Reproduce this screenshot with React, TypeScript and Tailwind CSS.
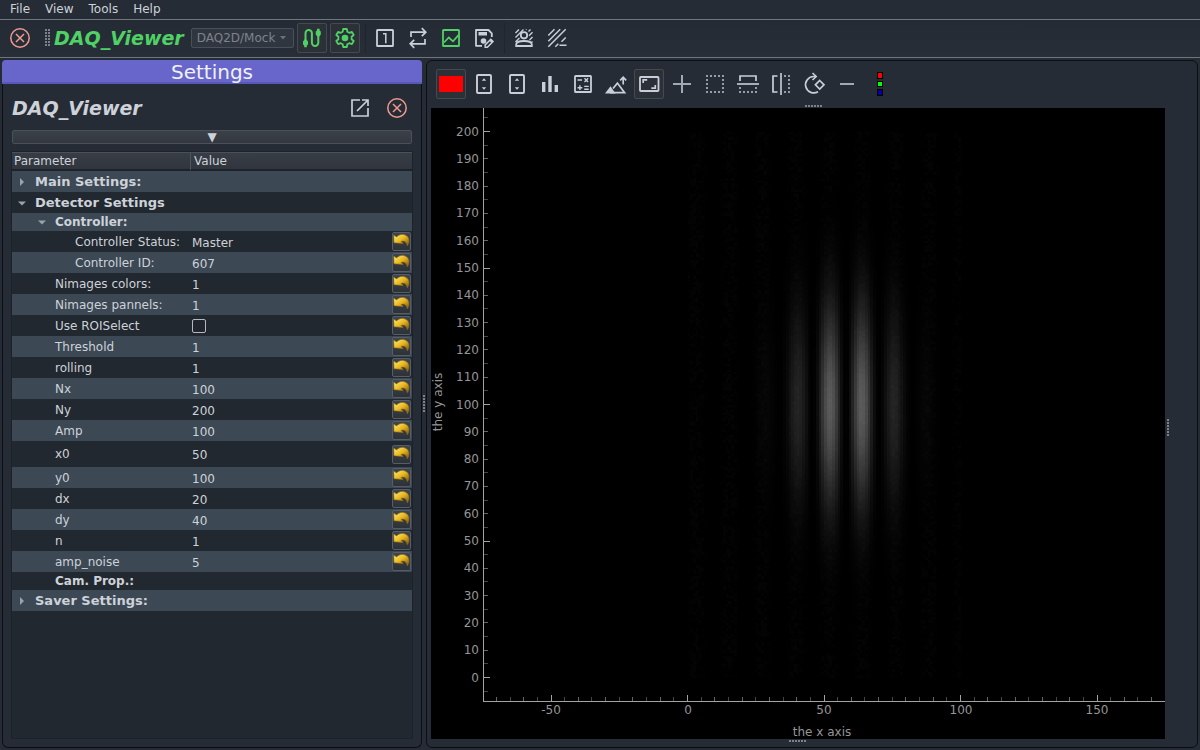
import type { ReactNode } from "react";

/* ---------- icons, all on a 30 x 30 grid ---------- */

function Icon({ children }: { children: ReactNode }) {
  return (
    <svg
      viewBox="0 0 30 30"
      className="h-[30px] w-[30px] shrink-0"
      fill="none"
      stroke="currentColor"
      strokeWidth="2"
      aria-hidden="true"
    >
      {children}
    </svg>
  );
}

const closeIcon = (
  <Icon>
    <circle cx="15" cy="15" r="9.2" strokeWidth="1.5" />
    <path d="M11 11l8 8M19 11l-8 8" strokeWidth="1.5" />
  </Icon>
);

const cableIcon = (
  <Icon>
    <path d="M8.5 19V10.2a3.2 3.2 0 0 1 6.4 0v9.6a3.2 3.2 0 0 0 6.4 0V11" />
    <path d="M6 21.5v-3l1.5-2h2l1.5 2v3l-1.2 1v1.8H7.2v-1.8zM18.8 8.5l1.2-1V5.7h2.6v1.8l1.2 1v3l-1.5 2h-2l-1.5-2z" fill="currentColor" stroke="none" />
  </Icon>
);

const gearIcon = (
  <Icon>
    <path
      strokeLinejoin="round"
      strokeWidth="1.8"
      d="M13.2 6h3.6l.5 2.7 2 1.1 2.6-.9 1.8 3.1-2.1 1.8v2.4l2.1 1.8-1.8 3.1-2.6-.9-2 1.1-.5 2.7h-3.6l-.5-2.7-2-1.1-2.6.9L6.3 18l2.1-1.8v-2.4L6.3 12l1.8-3.1 2.6.9 2-1.1z"
    />
    <circle cx="15" cy="15" r="3.3" fill="currentColor" stroke="none" />
  </Icon>
);

const oneIcon = (
  <Icon>
    <rect x="7" y="7" width="16" height="16" rx="0.6" strokeWidth="1.8" />
    <path d="M13 10.8H15.8V20.2" strokeWidth="1.5" />
  </Icon>
);

const repeatIcon = (
  <Icon>
    <path d="M8 14V9.2h14M22 16v4.8H8M18.8 5.2l4 4-4 4M11.2 16.8l-4 4 4 4" strokeWidth="1.7" />
  </Icon>
);

const imageIcon = (
  <Icon>
    <rect x="7" y="7" width="16" height="16" rx="0.6" strokeWidth="1.8" />
    <path d="M8 19.5l4.8-5 4.2 3.8 5.5-6.2" strokeWidth="1.7" />
  </Icon>
);

const saveAsIcon = (
  <Icon>
    <path d="M13 22.8H7V7h12.5l3.3 3.3V14" strokeLinejoin="round" strokeWidth="1.8" />
    <path d="M9.5 9h8.5v3.5H9.5z" fill="currentColor" stroke="none" />
    <circle cx="14.5" cy="18" r="2.8" fill="currentColor" stroke="none" />
    <path d="M16.2 24.3v-2.4l5.6-5.6 2.2 2.2-5.6 5.8z" strokeWidth="1.5" fill="#262c35" />
    <path d="M20.3 17.8l2.2 2.2 1.8-1.8-2.2-2.2z" fill="currentColor" stroke="none" />
  </Icon>
);

const personIcon = (
  <Icon>
    <path d="M6.500 10l3.500-3.500M6.500 14.500l8-8M6.500 19l4-4M17 6.700l.5-.4M19.500 8.500l2-2M20 12.700l3.500-3.500M20.500 17l3-3M22.500 19.500l1-1" strokeWidth="1.400" />
    <circle cx="15" cy="12.300" r="3.200" strokeWidth="1.800" />
    <path d="M7.200 23v-1.600c0-2.400 4.500-3.400 7.800-3.400s7.800 1 7.800 3.400V23z" strokeWidth="1.800" />
  </Icon>
);

const hatchIcon = (
  <Icon>
    <path d="M6.300 12.500l6.200-6.200M6.300 23.700L23.700 6.300M6.300 18.200L18.200 6.300M13.300 23.700l3-3" strokeWidth="1.500" />
    <path d="M17.500 22.300h7M19.500 18.700l4.200-4.200" strokeWidth="1.500" />
  </Icon>
);

const swatchIcon = (
  <Icon>
    <rect x="3" y="7" width="24" height="16" fill="#ff0000" stroke="none" />
  </Icon>
);

const levelsIcon = (
  <Icon>
    <rect x="8" y="6" width="14" height="18" rx="1" strokeWidth="1.9" />
    <path d="M12.800 11.800l2.200-2.600 2.200 2.600zM12.800 18.200l2.200 2.600 2.200-2.600z" fill="currentColor" stroke="none" />
  </Icon>
);

const barsIcon = (
  <Icon>
    <path d="M7 13h3.4v10H7zM13.3 7h3.4v16h-3.4zM19.6 16H23v7h-3.4z" fill="currentColor" stroke="none" />
  </Icon>
);

const calcIcon = (
  <Icon>
    <rect x="7" y="7" width="16" height="16" rx="0.6" strokeWidth="1.8" />
    <path d="M9.5 11h4.5M16.5 9.3l3.6 3.6M20.1 9.3l-3.6 3.6M9.5 18.7h4.8M11.9 16.3v4.8M16.2 17.4h4.5M16.2 20.2h4.5" strokeWidth="1.4" />
  </Icon>
);

const mountainIcon = (
  <Icon>
    <path d="M4 24.5l5.5-7.2 5 7.2z" fill="currentColor" stroke="none" />
    <path d="M12 19.5l4.4-5.4 7.2 9.6H9" strokeWidth="1.7" />
    <path d="M22.2 15.5V9M19.2 11.3l3-3 3 3" strokeWidth="1.7" />
  </Icon>
);

const aspectIcon = (
  <Icon>
    <rect x="6" y="8" width="18.5" height="14" rx="0.8" strokeWidth="1.8" />
    <path d="M9.2 14v-3.2h4M21.3 16v3.2h-4" strokeWidth="1.7" />
  </Icon>
);

const plusIcon = (
  <Icon>
    <path d="M6 15h18M15 6v18" />
  </Icon>
);

const dottedIcon = (
  <Icon>
    <path d="M6 7h18M6 23h18M7 10v12M23 10v12" strokeDasharray="2 2" opacity="0.7" />
  </Icon>
);

const flipHIcon = (
  <Icon>
    <path d="M7 12V7h16v5" strokeWidth="1.7" />
    <path d="M4 15h22" opacity="0.8" />
    <path d="M6 23h18M7 18v3M23 18v3" strokeDasharray="2 2" opacity="0.7" />
  </Icon>
);

const flipVIcon = (
  <Icon>
    <path d="M11.500 7H7v16h4.500" strokeWidth="1.700" />
    <path d="M15 4v22" opacity="0.8" />
    <path d="M18 7h6M18 23h6M23 10v12" strokeDasharray="2 2" opacity="0.7" />
  </Icon>
);

const rotateIcon = (
  <Icon>
    <path d="M17 7.500H14.500a8.200 8.200 0 1 0 4.500 15.200" strokeWidth="1.700" />
    <path d="M13.500 4l3.700 3.500-3.700 3.500" strokeWidth="1.600" />
    <path d="M20.700 11.500l4.300 4.300-4.300 4.300-4.300-4.300z" strokeWidth="1.700" />
  </Icon>
);

const minusIcon = (
  <Icon>
    <path d="M8 15h14" />
  </Icon>
);

const rgbIcon = (
  <Icon>
    <g stroke="#000" strokeWidth="1">
      <rect x="12.500" y="3.500" width="5" height="6" fill="#ff0000" />
      <rect x="12.500" y="12.500" width="5" height="5" fill="#00ff00" />
      <rect x="12.500" y="20.500" width="5" height="6" fill="#00009c" />
    </g>
  </Icon>
);

const popOutIcon = (
  <Icon>
    <path d="M15 7H7v16h16v-8M12 18L22.500 7.500M17 7h6v6" strokeWidth="1.700" />
  </Icon>
);

function UndoArrow() {
  return (
    <svg viewBox="0 0 17 17" className="h-[17px] w-[17px]" aria-hidden="true">
      <defs>
        <linearGradient id="gold" x1="0" y1="0" x2="1" y2="1">
          <stop offset="0" stopColor="#fff07a" />
          <stop offset="0.5" stopColor="#e6b51f" />
          <stop offset="1" stopColor="#7d5208" />
        </linearGradient>
      </defs>
      <path
        d="M.8 2.200L3.600 4C6 1 11 .6 13.800 3c2.800 2.500 2.600 6 .6 9.600-.7-3-2-4.800-5.200-4.500l-1.300.4 2.200 1.900L1 9.700z"
        fill="url(#gold)"
        stroke="#a87808"
        strokeWidth="0.600"
      />
    </svg>
  );
}

function ToolButton({ label, active, color, children }: { label: string; active?: boolean; color?: string; children: ReactNode }) {
  return (
    <button
      type="button"
      aria-label={label}
      title={label}
      className={`flex h-[30px] w-[30px] shrink-0 items-center justify-center rounded-xs ${
        active ? "bg-[#2c3138] outline-1 -outline-offset-1 outline-[#454a50]" : ""
      } ${color ?? "text-[#c9cfd8]"}`}
    >
      {children}
    </button>
  );
}

function Grip({ vertical, className = "" }: { vertical?: boolean; className?: string }) {
  return (
    <svg width={vertical ? 3 : 18} height={vertical ? 18 : 3} className={`shrink-0 ${className}`} aria-hidden="true">
      {[0, 1, 2, 3, 4, 5].map((i) => (
        <rect key={i} x={vertical ? 0 : i * 3} y={vertical ? i * 3 : 0} width="2" height="2" fill="#7d8289" />
      ))}
    </svg>
  );
}

/* ---------- settings tree ---------- */

type Row = {
  name: string;
  value?: string;
  check?: boolean;
  level: 0 | 1 | 2;
  head?: boolean;
  arrow?: "open" | "closed";
  tall?: boolean;
};

const rows: Row[] = [
  { name: "Main Settings:", level: 0, head: true, arrow: "closed" },
  { name: "Detector Settings", level: 0, head: true, arrow: "open" },
  { name: "Controller:", level: 1, head: true, arrow: "open" },
  { name: "Controller Status:", value: "Master", level: 2 },
  { name: "Controller ID:", value: "607", level: 2 },
  { name: "Nimages colors:", value: "1", level: 1 },
  { name: "Nimages pannels:", value: "1", level: 1 },
  { name: "Use ROISelect", check: true, level: 1 },
  { name: "Threshold", value: "1", level: 1 },
  { name: "rolling", value: "1", level: 1 },
  { name: "Nx", value: "100", level: 1 },
  { name: "Ny", value: "200", level: 1 },
  { name: "Amp", value: "100", level: 1 },
  { name: "x0", value: "50", level: 1, tall: true },
  { name: "y0", value: "100", level: 1 },
  { name: "dx", value: "20", level: 1 },
  { name: "dy", value: "40", level: 1 },
  { name: "n", value: "1", level: 1 },
  { name: "amp_noise", value: "5", level: 1 },
  { name: "Cam. Prop.:", level: 1, head: true },
  { name: "Saver Settings:", level: 0, head: true, arrow: "closed" },
];

const indents = ["pl-1", "pl-6", "pl-11"];

function TreeRow({ row }: { row: Row }) {
  const height = row.tall ? "h-[26px]" : row.head && row.level === 1 ? "h-[18px]" : "h-[21px]";
  const weight = row.head ? (row.level === 0 ? "font-bold text-[13px]" : "font-bold") : "";
  const hasValue = row.value !== undefined || row.check;
  return (
    <tr className={`${height} odd:bg-[#3c4854] even:bg-[#22282f]`}>
      <td className={`p-0 ${indents[row.level]}`}>
        <div className={`flex items-center leading-4 ${weight}`}>
          <span className="flex w-[19px] shrink-0 pl-0.5">
            {row.arrow && (
              <svg viewBox="0 0 8 8" className="h-2 w-2" fill="#9aa2ab" aria-hidden="true">
                <path d={row.arrow === "open" ? "M0 2.500h8L4 6.500z" : "M2 0v8l4-4z"} />
              </svg>
            )}
          </span>
          <span className="whitespace-nowrap">{row.name}</span>
        </div>
      </td>
      <td className="p-0 pr-px pl-0.5">
        {hasValue && (
          <div className="flex items-center justify-between">
            {row.check ? (
              <input
                type="checkbox"
                aria-label={row.name}
                className="h-[14px] w-[14px] appearance-none rounded-xs border border-[#b4bac2] bg-[#20262c] checked:bg-[#c3c9d1]"
              />
            ) : (
              <span className="pt-0.5 leading-4">{row.value}</span>
            )}
            <button
              type="button"
              aria-label={`Reset ${row.name}`}
              className="flex h-[19px] w-[19px] items-center justify-center rounded-xs border border-[#565d66] bg-linear-to-b from-[#3f454e] to-[#2d3238]"
            >
              <UndoArrow />
            </button>
          </div>
        )}
      </td>
    </tr>
  );
}

/* ---------- plot ---------- */

const UNIT = 2.73;
const X0 = 256.5;
const Y0 = 569.5;
const px = (v: number) => X0 + v * UNIT;
const py = (v: number) => Y0 - v * UNIT;

const fringe = (d: number) => Math.sin((Math.PI * d) / 12.2) ** 2;

const columns = Array.from({ length: 100 }, (_, i) => {
  const d = i + 0.5 - 58;
  const left = Math.round(px(i));
  return {
    x: left,
    width: Math.round(px(i + 1)) - left,
    level: 0.4 * Math.exp((-d * d) / 302) * fringe(d),
  };
});

const profile = Array.from({ length: 41 }, (_, i) => {
  const d = (i - 20) * 5;
  return Math.exp((-d * d) / 1208);
});

/* Detector noise, grouped into three brightness levels. */
const noise = (() => {
  let seed = 7;
  const random = () => {
    seed = (seed * 16807) % 2147483647;
    return seed / 2147483647;
  };
  const paths = ["", "", ""];
  for (let x = 0; x < 100; x++) {
    for (let y = 0; y < 200; y++) {
      const level = Math.floor(random() * 3.4 * fringe(x + 0.5 - 58));
      if (level > 0) {
        const left = Math.round(px(x));
        const top = Math.round(py(y + 1));
        const w = Math.round(px(x + 1)) - left;
        const h = Math.round(py(y)) - top;
        paths[level - 1] += `M${left} ${top}h${w}v${h}h-${w}z`;
      }
    }
  }
  return paths;
})();

const steps = (from: number, to: number) => Array.from({ length: (to - from) / 5 + 1 }, (_, i) => from + i * 5);

function tick(v: number) {
  if (v % 50 === 0) return { size: 6, color: "#a3a39f" };
  if (v % 10 === 0) return { size: 4, color: "#656565" };
  return { size: 4, color: "#444444" };
}

function Plot() {
  return (
    <svg viewBox="0 0 734 631" className="block h-full w-full" role="img" aria-label="Detector image">
      <defs>
        <linearGradient id="profile" x1="0" y1="0" x2="0" y2="1">
          {profile.map((o, i) => (
            <stop key={i} offset={i / 40} stopColor="#fff" stopOpacity={o} />
          ))}
        </linearGradient>
      </defs>
      <g shapeRendering="crispEdges">
        {columns.map((c) => (
          <rect key={c.x} x={c.x} y={py(200)} width={c.width} height={200 * UNIT} fill="url(#profile)" opacity={c.level} />
        ))}
        {noise.map((d, i) => (
          <path key={i} d={d} fill="#fff" opacity={(i + 1) * 0.005} />
        ))}
        <path d="M52.500 0V593.500H734" fill="none" stroke="#a3a39f" />
        {steps(-5, 205).map((v) => {
          const t = tick(v);
          return <rect key={v} x="53" y={Math.round(py(v) - 0.5)} width={t.size} height="1" fill={t.color} />;
        })}
        {steps(-70, 170).map((v) => {
          const t = tick(v);
          return <rect key={v} x={Math.round(px(v) - 0.5)} y={593 - t.size} width="1" height={t.size} fill={t.color} />;
        })}
      </g>
      <g fill="#969696" fontSize="12">
        {Array.from({ length: 21 }, (_, i) => i * 10).map((v) => (
          <text key={v} x="48" y={Math.round(py(v) + 4)} textAnchor="end">
            {v}
          </text>
        ))}
        {[-50, 0, 50, 100, 150].map((v) => (
          <text key={v} x={Math.round(px(v))} y="606" textAnchor="middle">
            {v}
          </text>
        ))}
        <text x="391" y="628" textAnchor="middle">
          the x axis
        </text>
        <text transform="translate(11 294) rotate(-90)" textAnchor="middle">
          the y axis
        </text>
      </g>
    </svg>
  );
}

/* ---------- window ---------- */

const green = "text-[#4fd165]";
const salmon = "text-[#ee9a90]";

export default function App() {
  return (
    <div className="flex h-screen flex-col overflow-hidden bg-[#262c35] font-['DejaVu_Sans',sans-serif] text-[12px] text-[#cdd2d9]">
      <nav className="flex h-[19px] shrink-0 items-center gap-[15px] px-[10px] pb-0.5 leading-4">
        <a href="#file">File</a>
        <a href="#view">View</a>
        <a href="#tools">Tools</a>
        <a href="#help">Help</a>
      </nav>

      <header className="flex h-[39px] shrink-0 items-center border-y border-[#71757c] bg-linear-to-b from-[#252b34] to-[#282e38] pb-px pl-[5px]">
        <ToolButton label="Quit" color={salmon}>{closeIcon}</ToolButton>
        <span className="ml-[10px] flex">
          <Grip vertical />
          <Grip vertical />
        </span>
        <h1 className="ml-[3px] text-[19px] leading-6 font-bold text-[#4fd165] italic">DAQ_Viewer</h1>
        <div className="relative ml-[7px] flex">
          <select
            aria-label="Detector"
            disabled
            className="h-5 w-[103px] appearance-none rounded-xs border border-[#4a5059] bg-[#30363f] pl-[5px] text-[12px] leading-4 text-[#7d838b] opacity-100"
          >
            <option>DAQ2D/Mock</option>
          </select>
          <svg viewBox="0 0 6 4" className="pointer-events-none absolute top-2 right-2 h-1 w-1.5" fill="#6b7179" aria-hidden="true">
            <path d="M0 0h6L3 3.500z" />
          </svg>
        </div>
        <div className="ml-[3px] flex gap-[3px]">
          <ToolButton label="Initialize detector" active color={green}>{cableIcon}</ToolButton>
          <ToolButton label="Show settings" active color={green}>{gearIcon}</ToolButton>
        </div>
        <div className="ml-[5px] flex gap-[3px] border-l border-[#20252d] pl-1">
          <ToolButton label="Single grab">{oneIcon}</ToolButton>
          <ToolButton label="Continuous grab">{repeatIcon}</ToolButton>
          <ToolButton label="Show image" color={green}>{imageIcon}</ToolButton>
          <ToolButton label="Save as">{saveAsIcon}</ToolButton>
        </div>
        <div className="ml-[5px] flex gap-[3px] border-l border-[#20252d] pl-1">
          <ToolButton label="Take background">{personIcon}</ToolButton>
          <ToolButton label="Subtract background">{hatchIcon}</ToolButton>
        </div>
      </header>

      <main className="flex min-h-0 flex-1 p-0.5">
        <aside className="flex w-[420px] shrink-0 flex-col">
          <h2 className="h-6 rounded-t-sm border-b-2 border-[#5a57b8] bg-[#6866cb] text-center text-[20px] leading-6 text-[#f0f2f5]">
            Settings
          </h2>
          <div className="flex min-h-0 flex-1 flex-col rounded-b-md border border-t-0 border-[#0c0e11] px-2 pb-2">
            <div className="flex h-[46px] items-center pt-[2px] pr-px pl-px">
              <h3 className="mr-auto text-[19px] leading-6 font-bold italic">DAQ_Viewer</h3>
              <ToolButton label="Detach panel">{popOutIcon}</ToolButton>
              <span className="w-[7px]" />
              <ToolButton label="Close panel" color={salmon}>{closeIcon}</ToolButton>
            </div>
            <button
              type="button"
              aria-label="Toggle header"
              className="mx-px flex h-[14px] shrink-0 items-center justify-center rounded-xs border border-[#4b5159] bg-linear-to-b from-[#3b4149] to-[#333840]"
            >
              <span className="leading-3">▼</span>
            </button>
            <div className="mt-[7px] min-h-0 flex-1 overflow-hidden border border-[#1d2229] bg-[#22282f]">
              <table className="w-full table-fixed border-separate border-spacing-0">
                <colgroup>
                  <col className="w-[178px]" />
                  <col />
                </colgroup>
                <thead>
                  <tr className="h-[19px] bg-linear-to-b from-[#383e46] to-[#30353d] text-left leading-4">
                    <th className="border-t border-b-2 border-t-[#4b5159] border-b-[#1e2329] p-0 pl-0.5 font-normal">
                      Parameter
                    </th>
                    <th className="border-t border-b-2 border-l border-t-[#4b5159] border-b-[#1e2329] border-l-[#4f555d] p-0 pl-[3px] font-normal">
                      Value
                    </th>
                  </tr>
                </thead>
                <tbody>
                  {rows.map((row) => (
                    <TreeRow key={row.name} row={row} />
                  ))}
                </tbody>
              </table>
            </div>
          </div>
        </aside>

        <div className="flex w-1 shrink-0 items-center justify-end">
          <Grip vertical />
        </div>

        <section className="flex min-w-0 flex-1 flex-col rounded-md border border-[#0c0e11] pl-1">
          <div className="flex h-[43px] shrink-0 items-center gap-[3px] pt-[3px] pl-[5px]">
            <ToolButton label="Red channel" active>{swatchIcon}</ToolButton>
            <ToolButton label="Levels">{levelsIcon}</ToolButton>
            <ToolButton label="Auto levels">{levelsIcon}</ToolButton>
            <ToolButton label="Histogram">{barsIcon}</ToolButton>
            <ToolButton label="Math">{calcIcon}</ToolButton>
            <ToolButton label="Raise image">{mountainIcon}</ToolButton>
            <ToolButton label="Lock aspect ratio" active>{aspectIcon}</ToolButton>
            <ToolButton label="Crosshair" color="text-[#a3a9b2]">{plusIcon}</ToolButton>
            <ToolButton label="Region select">{dottedIcon}</ToolButton>
            <ToolButton label="Flip vertically">{flipHIcon}</ToolButton>
            <ToolButton label="Flip horizontally">{flipVIcon}</ToolButton>
            <ToolButton label="Rotate">{rotateIcon}</ToolButton>
            <ToolButton label="Line" color="text-[#a3a9b2]">{minusIcon}</ToolButton>
            <ToolButton label="RGB channels">{rgbIcon}</ToolButton>
          </div>
          <div className="flex h-1 shrink-0 justify-center pt-px">
            <Grip />
          </div>
          <div className="flex min-h-0 flex-1">
            <div className="flex min-w-0 flex-1 flex-col">
              <div className="min-h-0 flex-1 bg-black">
                <Plot />
              </div>
              <div className="flex h-2 shrink-0 justify-center pt-px">
                <Grip />
              </div>
            </div>
            <div className="flex w-8 shrink-0 items-center pl-0.5">
              <Grip vertical />
            </div>
          </div>
        </section>
      </main>
    </div>
  );
}
